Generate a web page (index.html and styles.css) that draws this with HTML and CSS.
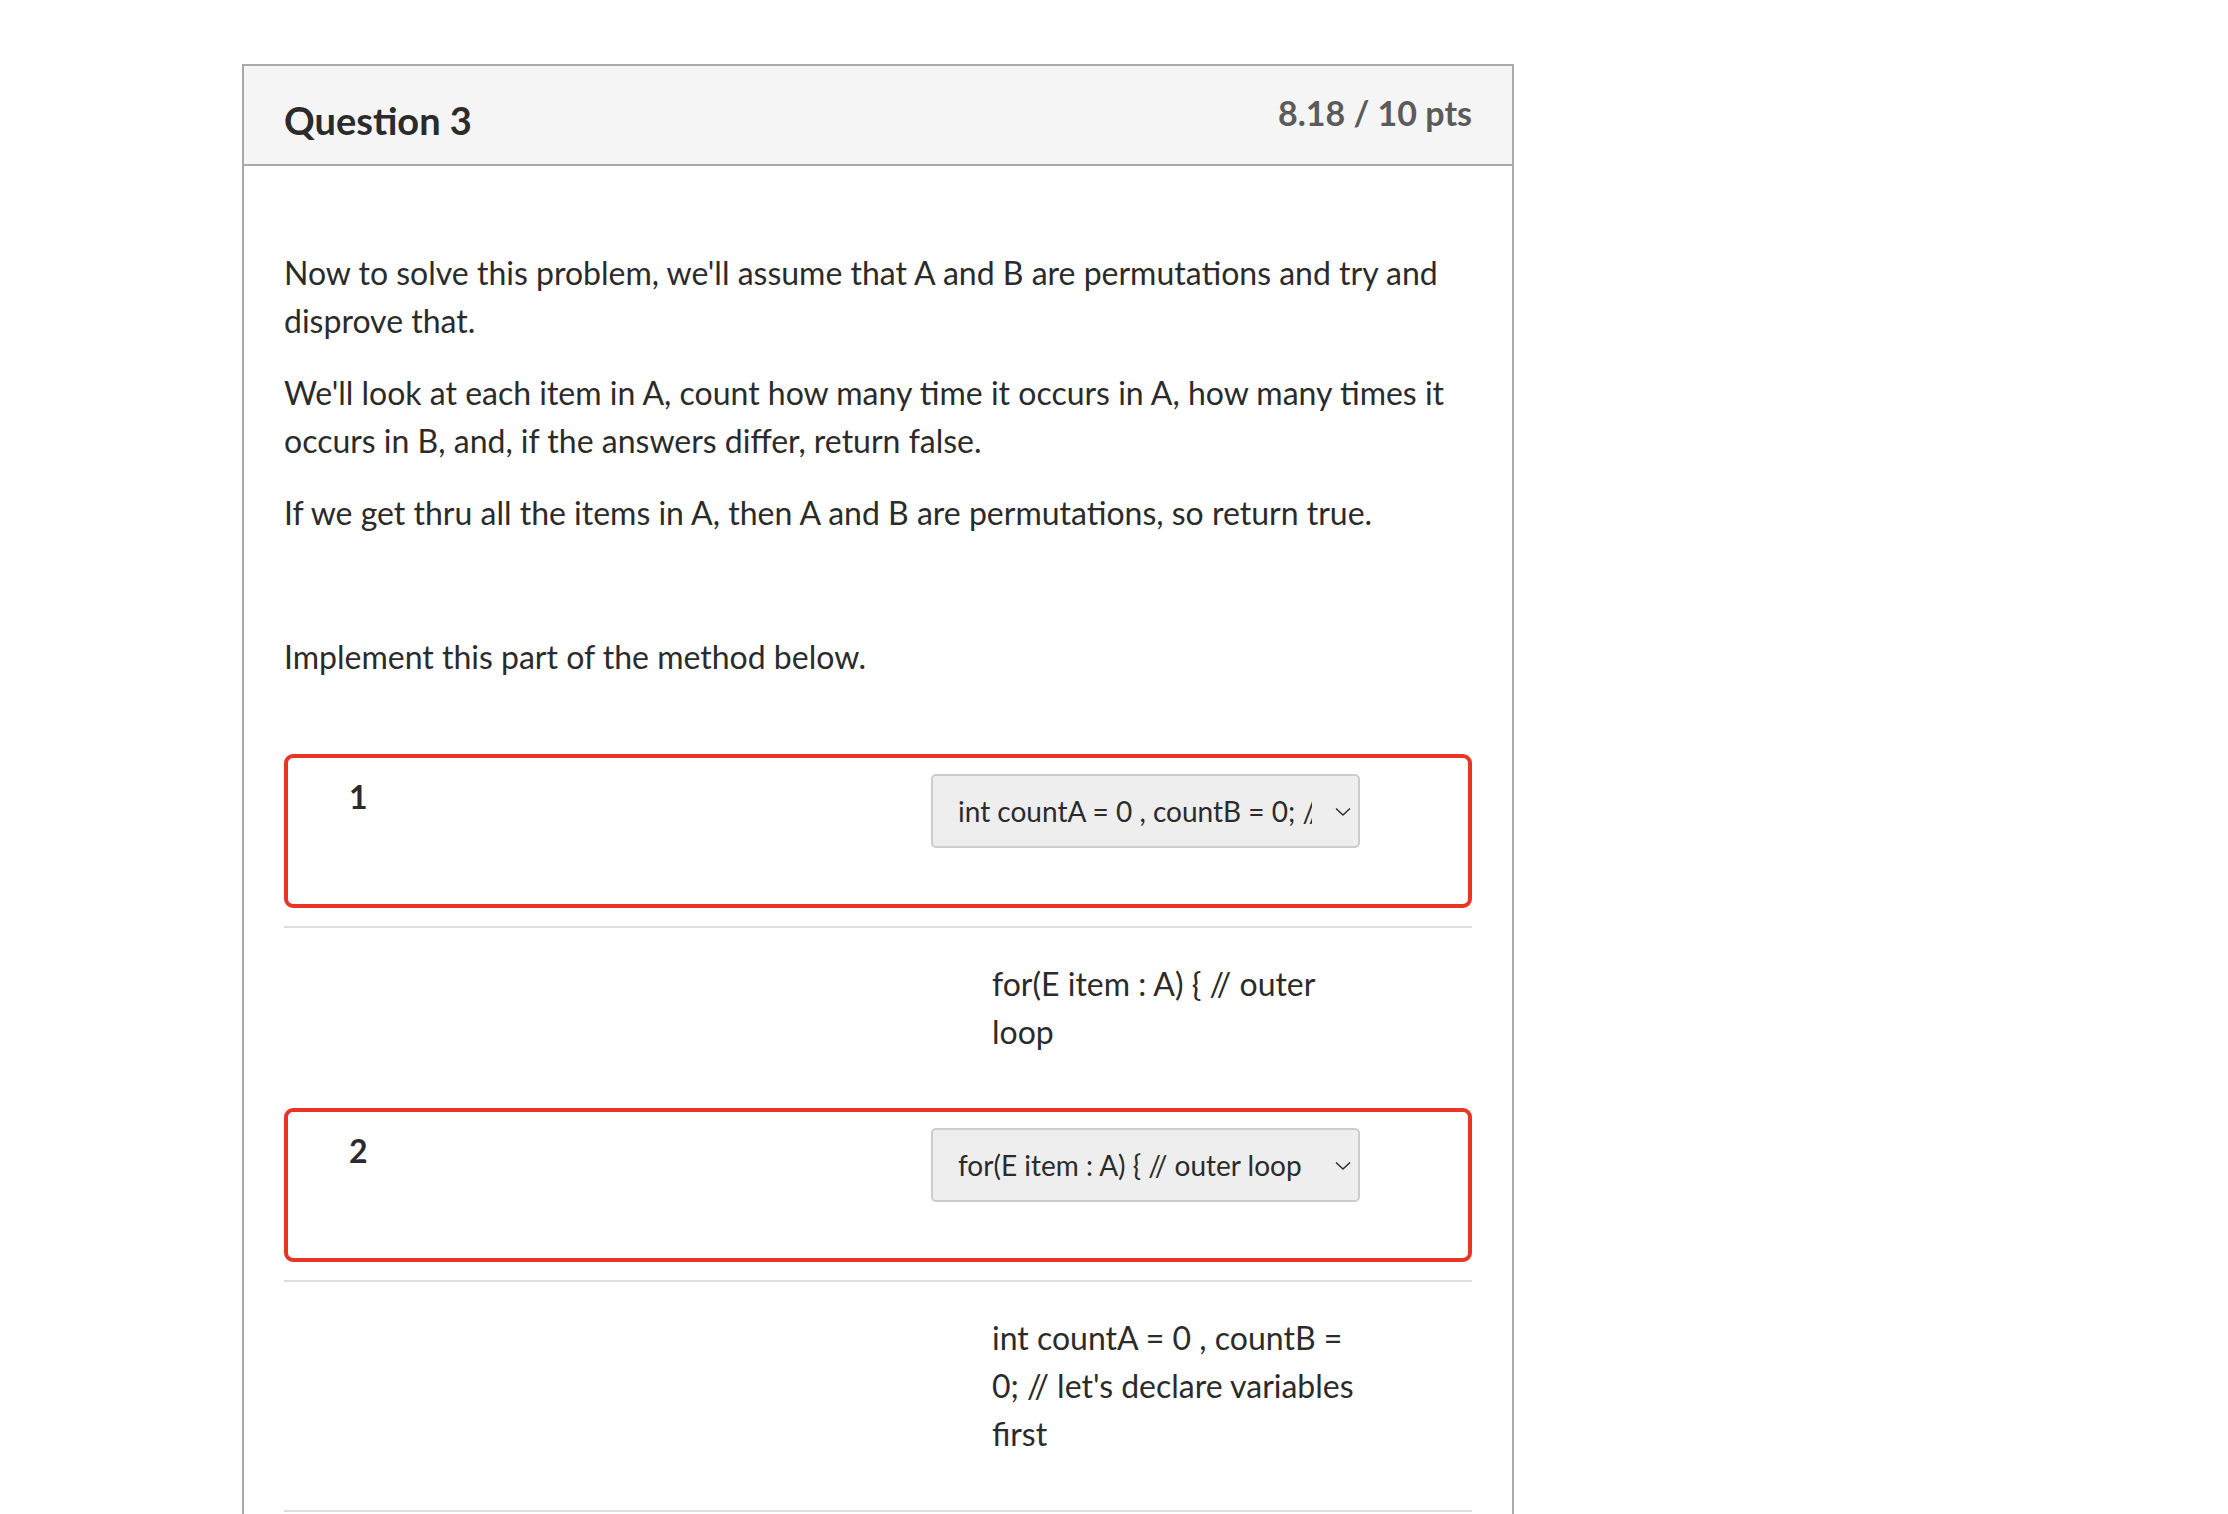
FILE: index.html
```html
<!DOCTYPE html>
<html lang="en">
<head>
<meta charset="utf-8">
<title>Question 3</title>
<link rel="stylesheet" href="styles.css">
</head>
<body>
<div class="page">
  <div class="card">
    <div class="card-header">
      <h2 class="q-title">Question 3</h2>
      <div class="q-points">8.18 / 10 pts</div>
    </div>
    <div class="card-body">
      <p>Now to solve this problem, we'll assume that A and B are permutations and try and disprove that.</p>
      <p>We'll look at each item in A, count how many time it occurs in A, how many times it occurs in B, and, if the answers differ, return false.</p>
      <p>If we get thru all the items in A, then A and B are permutations, so return true.</p>
      <p>&nbsp;</p>
      <p class="last-p">Implement this part of the method below.</p>

      <div class="answer incorrect">
        <div class="answer-label">1</div>
        <div class="select">
          <span class="select-text">int countA = 0 , countB = 0; // let's declare variables first</span>
          <svg class="chev" width="18" height="11" viewBox="0 0 18 11"><polyline points="2,2.5 9,9 16,2.5" fill="none" stroke="#333" stroke-width="1.6"/></svg>
        </div>
      </div>
      <div class="match-row">
        <div class="match-text">for(E item : A) { // outer loop</div>
      </div>

      <div class="answer incorrect">
        <div class="answer-label">2</div>
        <div class="select">
          <span class="select-text">for(E item : A) { // outer loop</span>
          <svg class="chev" width="18" height="11" viewBox="0 0 18 11"><polyline points="2,2.5 9,9 16,2.5" fill="none" stroke="#333" stroke-width="1.6"/></svg>
        </div>
      </div>
      <div class="match-row last">
        <div class="match-text">int countA = 0 , countB = 0; // let's declare variables first</div>
      </div>
    </div>
  </div>
</div>
</body>
</html>
```

FILE: styles.css
```css
html, body {
  margin: 0;
  padding: 0;
  background: #ffffff;
}

body {
  font-family: Lato, "Open Sans", "Liberation Sans", sans-serif;
  color: #2b2b2b;
}

.page {
  padding: 64px 0 0 242px;
}

.card {
  width: 1272px;
  box-sizing: border-box;
  border: 2px solid #a9a9a9;
  border-bottom: none;
  min-height: 1460px;
}

.card-header {
  display: flex;
  justify-content: space-between;
  align-items: flex-start;
  height: 98px;
  padding: 0 40px;
  background: #f5f5f5;
  border-bottom: 2px solid #a9a9a9;
}

.q-title {
  margin: 31px 0 0 0;
  font-size: 38px;
  line-height: 46px;
  font-weight: 700;
  color: #2b2b2b;
}

.q-points {
  margin-top: 26px;
  font-size: 34px;
  line-height: 41px;
  font-weight: 700;
  color: #5b5b5b;
}

.card-body {
  padding: 83px 40px 0 40px;
}

.card-body p {
  margin: 0 0 24px 0;
  font-size: 32px;
  line-height: 48px;
}

.card-body p.last-p {
  margin-bottom: 73px;
}

.answer {
  display: grid;
  grid-template-columns: 582px 429px;
  align-items: start;
  height: 154px;
  box-sizing: border-box;
  padding: 16px 0 0 61px;
  border: 4px solid #ea3526;
  border-radius: 9px;
}

.answer-label {
  font-size: 32px;
  line-height: 46px;
  font-weight: 700;
  color: #2b2b2b;
}

.select {
  display: flex;
  align-items: center;
  justify-content: space-between;
  width: 429px;
  height: 74px;
  box-sizing: border-box;
  padding: 0 6px 0 25px;
  background: #eeeeee;
  border: 2px solid #cccccc;
  border-radius: 5px;
}

.select-text {
  display: block;
  width: 354px;
  overflow: hidden;
  white-space: nowrap;
  font-size: 28px;
  line-height: 34px;
  color: #2b2b2b;
}

.chev {
  flex: none;
}

.match-row {
  margin-top: 18px;
  border-top: 2px solid #dddddd;
  padding: 32px 0 52px 708px;
}

.match-row.last {
  border-bottom: 2px solid #dddddd;
}

.match-text {
  width: 370px;
  font-size: 32px;
  line-height: 48px;
  color: #2b2b2b;
}
```
